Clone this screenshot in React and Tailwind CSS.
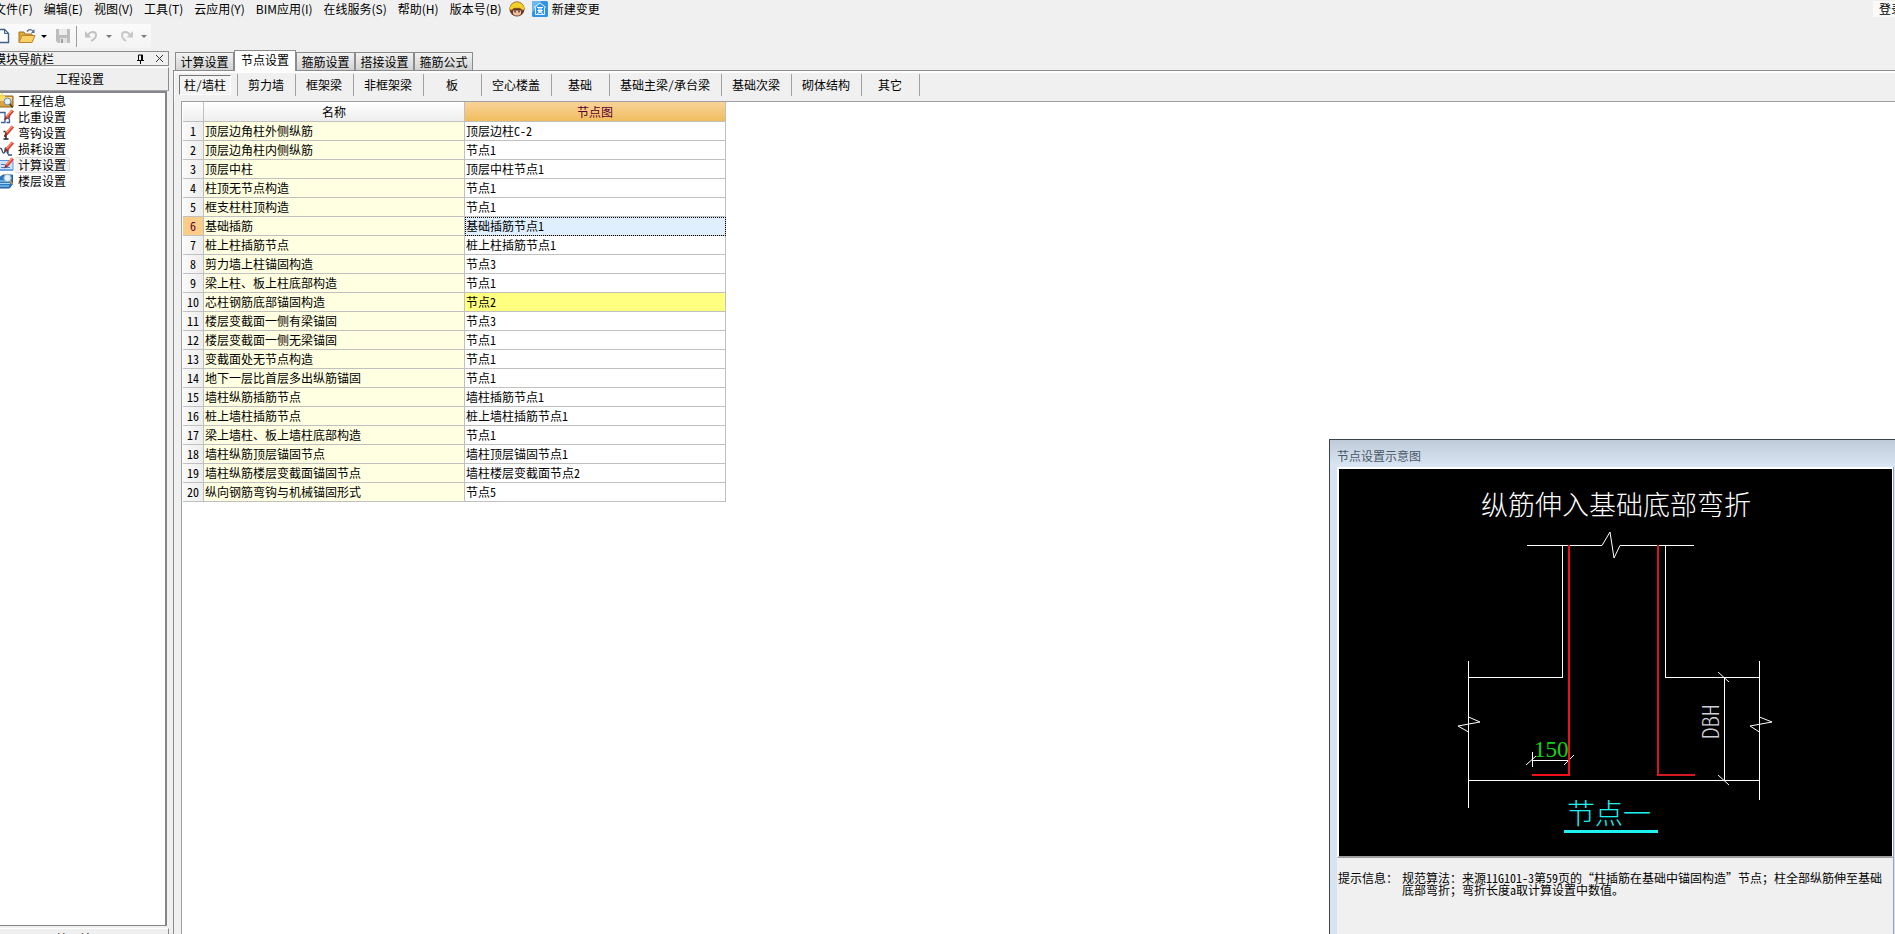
import React, { useState } from 'react';

const menus = ['文件(F)', '编辑(E)', '视图(V)', '工具(T)', '云应用(Y)', 'BIM应用(I)', '在线服务(S)', '帮助(H)', '版本号(B)'];

const tabs = ['计算设置', '节点设置', '箍筋设置', '搭接设置', '箍筋公式'];

const categories = ['柱/墙柱', '剪力墙', '框架梁', '非框架梁', '板', '空心楼盖', '基础', '基础主梁/承台梁', '基础次梁', '砌体结构', '其它'];

const rows = [
    ['顶层边角柱外侧纵筋', '顶层边柱C-2'],
    ['顶层边角柱内侧纵筋', '节点1'],
    ['顶层中柱', '顶层中柱节点1'],
    ['柱顶无节点构造', '节点1'],
    ['框支柱柱顶构造', '节点1'],
    ['基础插筋', '基础插筋节点1'],
    ['桩上柱插筋节点', '桩上柱插筋节点1'],
    ['剪力墙上柱锚固构造', '节点3'],
    ['梁上柱、板上柱底部构造', '节点1'],
    ['芯柱钢筋底部锚固构造', '节点2'],
    ['楼层变截面一侧有梁锚固', '节点3'],
    ['楼层变截面一侧无梁锚固', '节点1'],
    ['变截面处无节点构造', '节点1'],
    ['地下一层比首层多出纵筋锚固', '节点1'],
    ['墙柱纵筋插筋节点', '墙柱插筋节点1'],
    ['桩上墙柱插筋节点', '桩上墙柱插筋节点1'],
    ['梁上墙柱、板上墙柱底部构造', '节点1'],
    ['墙柱纵筋顶层锚固节点', '墙柱顶层锚固节点1'],
    ['墙柱纵筋楼层变截面锚固节点', '墙柱楼层变截面节点2'],
    ['纵向钢筋弯钩与机械锚固形式', '节点5'],
];

// row index whose node differs from the default
const MODIFIED_ROW = 9;

const Pencil = () => (
    <>
        <path d="M7.500 7.500 13.500.5 16 2.500 10 9.500z" fill="#e23a26" />
        <path d="M8.500 7.500 14.500 1" stroke="#f79a80" strokeWidth="1.200" />
        <path d="M7.500 7.500 6 11.500l4-2z" fill="#8a2a1c" />
    </>
);

const navItems = [
    {
        label: '工程信息',
        icon: (
            <>
                <path d="M1 3h14v11H1z" fill="#d9a441" stroke="#8f641c" />
                <path d="M2 4h12v4H2z" fill="#f7d98c" />
                <circle cx="9.500" cy="8.500" r="3.400" fill="#e6f3fd" stroke="#6d8aa8" />
                <path d="m12 11 2.500 3.500" stroke="#5a4020" strokeWidth="1.600" />
                <path d="M4 0v7M1 3.500h6" stroke="#ffe14d" strokeWidth="1.600" />
            </>
        ),
    },
    {
        label: '比重设置',
        icon: (
            <>
                <path d="M2 3.500h5v10H3M11.500 4.500v4l-1 1 1 1v3h-3" fill="none" stroke="#3b5f9c" strokeWidth="1.300" />
                <Pencil />
            </>
        ),
    },
    {
        label: '弯钩设置',
        icon: (
            <>
                <path d="M5.500 6.500h2M8 7v7M5.500 14h5M6 11h2" fill="none" stroke="#222" strokeWidth="1.400" />
                <Pencil />
            </>
        ),
    },
    {
        label: '损耗设置',
        icon: (
            <>
                <path d="M2 8c2-3 2 5 4 4s0-5 2-5 0 5 2 6V7m0 7h4" fill="none" stroke="#35517f" strokeWidth="1.300" />
                <Pencil />
            </>
        ),
    },
    {
        label: '计算设置',
        icon: (
            <>
                <path d="M1 3.500h14v10H1z" fill="#cfe2fa" stroke="#5f93d8" />
                <path d="M3 7.500h4M3 10.500h9" stroke="#4b7fc4" />
                <path d="M1 12h14v2H1z" fill="#6ea3e6" />
                <Pencil />
            </>
        ),
    },
    {
        label: '楼层设置',
        icon: (
            <>
                <path d="m1 5 4-3h9.500v9l-3 4H1z" fill="#2a78c0" stroke="#1e5c99" />
                <path d="M1 8h11M1 10.500h11M1 13h10" stroke="#a9d6f5" />
                <circle cx="9.500" cy="5" r="3.700" fill="#e1f0fa" stroke="#8fa4b5" />
                <path d="m12 8 2.500 3" stroke="#c29a3a" strokeWidth="1.600" />
            </>
        ),
    },
];

const Caret = ({ className }) => (
    <svg viewBox="0 0 6 3" className={`h-[3px] w-1.5 shrink-0 ${className}`} aria-hidden="true">
        <path d="M0 0h6L3 3z" fill="currentColor" />
    </svg>
);

const Toolbar = () => (
    <div className="flex h-6 w-[151px] items-center bg-linear-to-b from-[#fbfbfb] to-[#f4f4f4]">
        <button aria-label="新建" className="-ml-1.5">
            <svg viewBox="0 0 16 16" className="size-4">
                <path d="M2.500 1.500h8l4 4v9h-12z" fill="#fff" stroke="#3f5f86" strokeWidth="1.400" />
                <path d="M10.500 1.500v4h4z" fill="#c5d6ea" stroke="#3f5f86" />
            </svg>
        </button>
        <button aria-label="打开" className="ml-2">
            <svg viewBox="0 0 18 16" className="h-4 w-[18px]">
                <path d="M1 4h5l1 2h7v8H1z" fill="#e0a63c" stroke="#a87420" />
                <path d="m1 14.500 3-7h13l-3 7z" fill="#fbd067" stroke="#b8862c" />
                <path d="M9 3.500c2-2.500 4-2.500 6-.5" fill="none" stroke="#566f8d" strokeWidth="1.300" />
                <path d="M16.500 1v4H13z" fill="#566f8d" />
            </svg>
        </button>
        <Caret className="ml-[5px] text-black" />
        <button aria-label="保存" className="ml-2">
            <svg viewBox="0 0 16 16" className="size-4">
                <path d="M1 1h14v14H3l-2-2z" fill="#bdbdbd" />
                <path d="M4 1h8v6H4z" fill="#ececec" />
                <path d="M5 10h7v5H5z" fill="#e2e2e2" />
                <path d="M6 11h2v4H6z" fill="#a0a0a0" />
            </svg>
        </button>
        <span className="ml-[5px] h-[21px] w-px bg-[#9c9c9c]" />
        <button aria-label="撤销" className="ml-[7px]">
            <svg viewBox="0 0 14 14" className="size-3.5">
                <path d="M4 6c2-4 8-4 8 0 0 2.500-2 4.500-5 6" fill="none" stroke="#c2c2c2" strokeWidth="2" />
                <path d="M1 2v6.500h6.500z" fill="#c2c2c2" />
            </svg>
        </button>
        <Caret className="ml-2 text-[#7a7a7a]" />
        <button aria-label="恢复" className="ml-2">
            <svg viewBox="0 0 14 14" className="size-3.5">
                <path d="M10 6C8 2 2 2 2 6c0 2.500 1.500 4.500 4 6" fill="none" stroke="#c8c8c8" strokeWidth="2" />
                <path d="M13 2v6.500H6.500z" fill="#c8c8c8" />
            </svg>
        </button>
        <Caret className="ml-[7px] text-[#7a7a7a]" />
    </div>
);

const NodeDrawing = () => (
    <svg viewBox="0 0 553 387" className="block h-auto w-full bg-black" role="img" aria-label="节点一">
        <g fill="none" stroke="#fff" shapeRendering="crispEdges">
            <path d="M188 76.500h75M281 76.500h74" />
            <path d="M223.500 76v132.500H129M326.500 76v132.500H420" />
            <path d="M129.500 192v147M420.500 192v139M129 311.500h291" />
            <path d="M385.500 208v103M193.500 283v15M193 291.500h37" />
        </g>
        <g fill="none" stroke="#fff">
            <path d="m263 76.500 8-13.500 4 26 6-12.500" />
            <path d="m129.500 248 11.500 5-22 4 10.500 6" />
            <path d="m420.500 248 12.500 5-22 4 9.500 6" />
            <path d="m379 203 11 10M379 306l11 10" />
            <path d="m187 296 10-9M225 296l10-10" />
        </g>
        <path d="M230 76v230h-37" fill="none" stroke="#f0101a" strokeWidth="2" shapeRendering="crispEdges" />
        <path d="M319 76v230h37" fill="none" stroke="#d81820" strokeWidth="2" shapeRendering="crispEdges" />
        <text x="142" y="46" fontSize="27" fill="#fff" className="font-light">纵筋伸入基础底部弯折</text>
        <text x="195" y="288" fontSize="23" fill="#12d412" fontFamily="'Liberation Serif', serif">150</text>
        <text transform="translate(380 270) rotate(-90)" fontSize="23" fill="#cfcfd8" className="font-light">DBH</text>
        <text x="228" y="355" fontSize="28" fill="#1ff0f0" className="font-light">节点一</text>
        <path d="M225 362.500h94" stroke="#1ff0f0" strokeWidth="3" />
    </svg>
);

const App = () => {
    const [tab, setTab] = useState(1);
    const [category, setCategory] = useState(0);
    const [selected, setSelected] = useState(5);
    const [nav, setNav] = useState(4);

    return (
        <div className="relative flex h-screen flex-col overflow-hidden bg-[#f0f0f0] font-['Noto_Sans_CJK_SC',sans-serif] text-[12px] leading-4 whitespace-nowrap text-black">
            <header className="flex h-5 items-center pb-0.5">
                <nav className="-ml-1.5 flex items-center gap-[11px]">
                    {menus.map((m) => (
                        <button key={m}>{m}</button>
                    ))}
                </nav>
                <button aria-label="用户" className="ml-[7px]">
                    <svg viewBox="0 0 16 16" className="size-4">
                        <circle cx="8" cy="8" r="7.500" fill="#6b3a2a" />
                        <path d="M.5 8.500a7.500 7.500 0 0 1 15 0l-2 .5-2.500-2H5L2.500 9z" fill="#f2d02c" stroke="#b88a10" strokeWidth=".5" />
                        <path d="M4 9.500h8V13l-2 1.500H6L4 13z" fill="#eebf9c" />
                        <path d="M6 9.500v2M10 9.500v2" stroke="#222" strokeWidth="1.200" />
                    </svg>
                </button>
                <button className="ml-[7px] flex items-center gap-1">
                    <svg viewBox="0 0 16 16" className="size-4" aria-hidden="true">
                        <rect width="16" height="16" rx="1.500" fill="#2f93e6" />
                        <path d="M0 0h9L0 12z" fill="#6db8f2" />
                        <path d="M2 6.500 8 2l6 4.500M3.500 6.500v7h9v-7" fill="none" stroke="#e6f4ff" />
                        <path d="M5 6.500h6M7 6.500V9M9 6.500V9M5.500 9.500h5l-5 3M6 10l5 2.500" fill="none" stroke="#fff" />
                    </svg>
                    新建变更
                </button>
                <button className="-mr-2 ml-auto bg-[#fafafa] pl-1.5">登录</button>
            </header>
            <div className="pt-1">
                <Toolbar />
            </div>

            <div className="flex min-h-0 flex-1 [font-feature-settings:'hwid']">
                <aside className="flex w-[169px] shrink-0 flex-col pt-px">
                    <div className="mt-0.5 flex h-[15px] items-center border border-l-0 border-[#8c8c8c]">
                        <h2 className="-ml-1.5">模块导航栏</h2>
                        <button aria-label="固定" className="ml-auto">
                            <svg viewBox="0 0 9 10" className="h-2.5 w-[9px]">
                                <path d="M2.500 1h4v5M2.500 1v5M5.500 1v5M1 6.500h7M4.500 7v3" fill="none" stroke="#000" />
                            </svg>
                        </button>
                        <button aria-label="关闭" className="mr-1 ml-2.5">
                            <svg viewBox="0 0 9 9" className="size-[9px]">
                                <path d="m1 1 7 7M8 1 1 8" stroke="#333" />
                            </svg>
                        </button>
                    </div>
                    <button className="mt-px h-6 shrink-0 border-t border-r border-b border-t-white border-r-[#8c8c8c] border-b-[#a8a8a8] bg-[#efefef] pr-2">
                        工程设置
                    </button>
                    <ul className="mr-0.5 flex-1 border-t-2 border-r-2 border-b border-[#85858c] bg-white">
                        {navItems.map((item, i) => (
                            <li key={item.label} className="h-4">
                                <button onClick={() => setNav(i)} className="flex h-4 items-center">
                                    <svg viewBox="0 0 16 16" className="-ml-0.5 h-4 w-4 shrink-0" aria-hidden="true">
                                        {item.icon}
                                    </svg>
                                    <span
                                        className={`ml-px h-4 rounded-r-[3px] border pr-[3px] pl-0.5 leading-[14px] ${
                                            nav === i ? 'border-[#dcdcdc] border-l-transparent bg-[#f4f4f4]' : 'border-transparent'
                                        }`}
                                    >
                                        {item.label}
                                    </span>
                                </button>
                            </li>
                        ))}
                    </ul>
                    <button className="mt-0.5 -mb-3.5 h-5 shrink-0 border-t border-r border-t-white border-r-[#8c8c8c] bg-[#efefef] pr-2">
                        绘图输入
                    </button>
                </aside>

                <main className="ml-1 flex min-w-0 flex-1 flex-col pt-0.5">
                    <div className="flex h-5 items-end pl-0.5" role="tablist">
                        {tabs.map((t, i) => (
                            <button
                                key={t}
                                role="tab"
                                aria-selected={tab === i}
                                onClick={() => setTab(i)}
                                className={
                                    tab === i
                                        ? 'z-10 -mb-px h-[21px] w-[62px] border border-b-0 border-[#8c8c8c] bg-white pb-0.5'
                                        : 'h-[18px] w-[59px] border border-b-0 border-[#8c8c8c] bg-linear-to-b from-[#f2f2f2] to-[#d2d2d2]'
                                }
                            >
                                {t}
                            </button>
                        ))}
                    </div>
                    <div className="flex min-h-0 flex-1 flex-col border-t border-l border-[#8c8c8c]">
                        <div className="flex h-[30px] shrink-0 items-center border-t-2 border-l border-white pb-1 pl-1">
                            {categories.map((c, i) => (
                                <div key={c} className="flex h-[22px] items-center border-r border-[#a0a0a0]">
                                    <button
                                        onClick={() => setCategory(i)}
                                        className={
                                            category === i
                                                ? 'mr-1.5 h-5 w-[52px] border border-t-[#777] border-r-white border-b-white border-l-[#777] bg-[#f4f4f4]'
                                                : 'min-w-[57px] pr-[11px] pl-2.5'
                                        }
                                    >
                                        {c}
                                    </button>
                                </div>
                            ))}
                        </div>
                        <div className="ml-[7px] min-h-0 flex-1 overflow-hidden border-t border-l border-[#a0a0a0] bg-white pl-px">
                            <table className="w-[543px] table-fixed border-separate border-spacing-0 text-left">
                                <thead>
                                    <tr className="h-5 text-center">
                                        <th className="w-[21px] border-r border-b border-[#c0c0c0] bg-linear-to-b from-white to-[#eee]" />
                                        <th className="w-[261px] border-r border-b border-[#c0c0c0] bg-linear-to-b from-white to-[#eee] p-0 font-normal">名称</th>
                                        <th className="w-[261px] border-r border-b border-[#c0c0c0] bg-linear-to-b from-[#f9d398] to-[#f0bd5c] p-0 font-normal text-[#5a0030]">节点图</th>
                                    </tr>
                                </thead>
                                <tbody>
                                    {rows.map(([name, node], i) => (
                                        <tr key={name} className="h-[19px]" onClick={() => setSelected(i)}>
                                            <th
                                                className={`border-r border-b border-[#c0c0c0] p-0 text-center font-normal ${
                                                    selected === i ? 'bg-[#fbcd88] text-[#5a0030]' : 'bg-linear-to-r from-[#fafafa] to-[#ededed]'
                                                }`}
                                            >
                                                {i + 1}
                                            </th>
                                            <td className="border-r border-b border-[#c0c0c0] bg-[#ffffe1] py-0 pr-0 pl-px">{name}</td>
                                            <td
                                                className={`border-r border-b border-[#c0c0c0] py-0 pr-0 pl-px ${
                                                    selected === i ? 'bg-[#dfeffe] outline-1 -outline-offset-1 outline-black outline-dotted' : ''
                                                } ${i === MODIFIED_ROW ? 'bg-[#ffff80]' : ''}`}
                                            >
                                                {node}
                                            </td>
                                        </tr>
                                    ))}
                                </tbody>
                            </table>
                        </div>
                    </div>
                </main>
            </div>

            <section
                aria-label="节点设置示意图"
                className="absolute right-0 bottom-0 z-20 flex h-[495px] w-[566px] flex-col border-t border-l border-[#3c4450] bg-[#d7e3f2] pr-px pl-[7px] [font-feature-settings:'hwid']"
            >
                <h3 className="-mr-px -ml-[7px] h-[27px] shrink-0 bg-linear-to-b from-[#bfcbd9] to-[#dae6f3] pt-2 pl-[7px] text-[#4a5868]">节点设置示意图</h3>
                <div className="flex-1 border-r border-[#8ea6bd] bg-[#f0f0f0]">
                    <div className="border-2 border-r border-white border-b-[#a0a0a0]">
                        <NodeDrawing />
                    </div>
                    <dl className="flex pt-3.5 pl-px leading-3">
                        <dt className="w-16 shrink-0">提示信息：</dt>
                        <dd>
                            规范算法：来源11G101-3第59页的“柱插筋在基础中锚固构造”节点；柱全部纵筋伸至基础
                            <br />
                            底部弯折；弯折长度a取计算设置中数值。
                        </dd>
                    </dl>
                </div>
            </section>
        </div>
    );
};

export default App;
